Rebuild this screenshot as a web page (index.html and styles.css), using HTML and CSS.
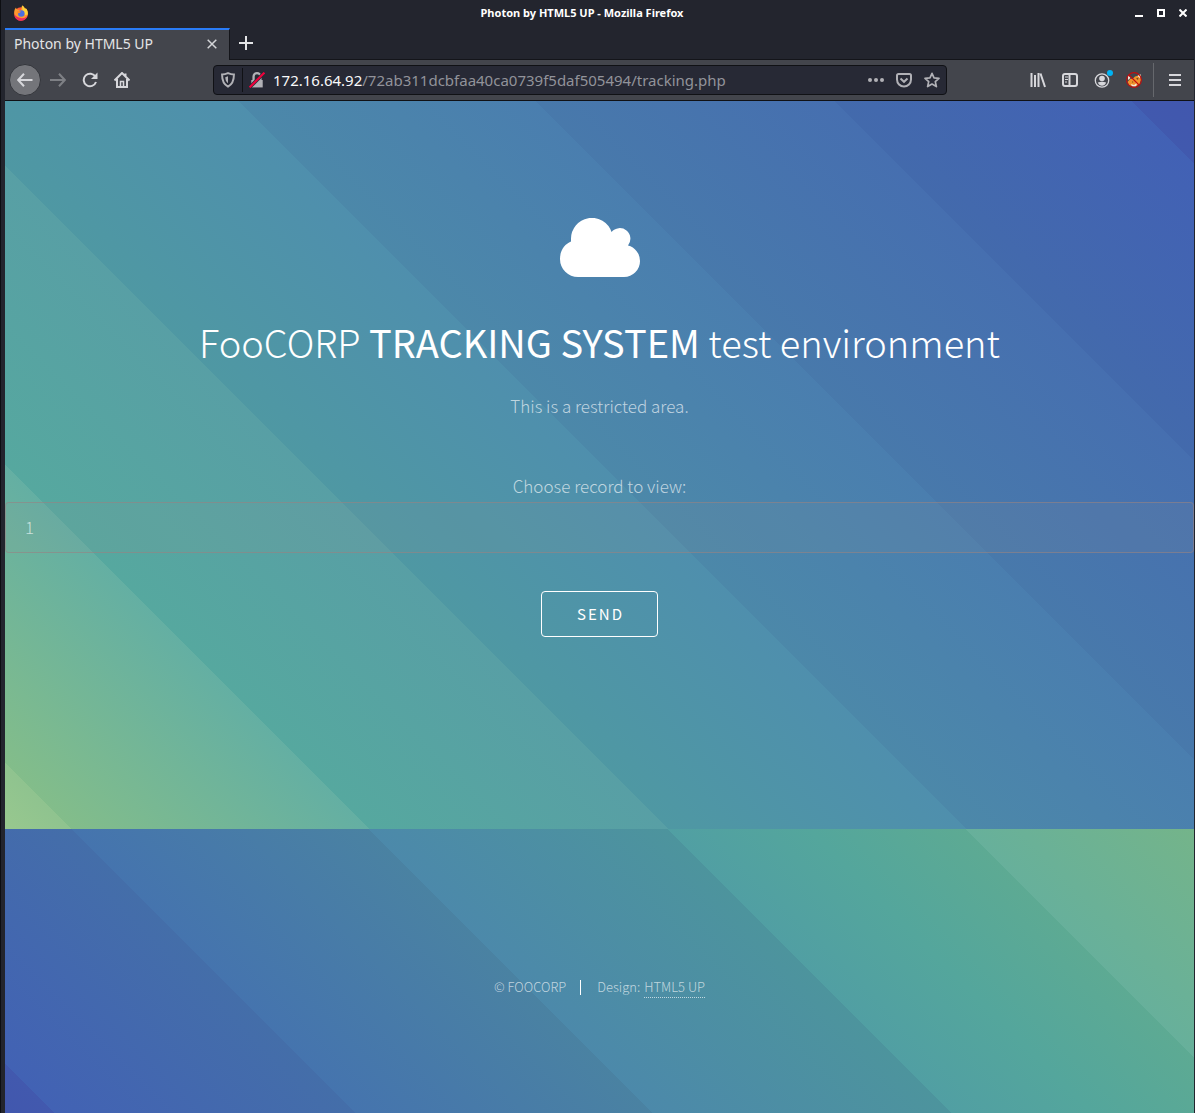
FILE: index.html
```html
<!DOCTYPE html>
<html lang="en">
<head>
<meta charset="utf-8">
<meta name="viewport" content="width=device-width, initial-scale=1">
<title>Photon by HTML5 UP</title>
<link rel="stylesheet" href="styles.css">
</head>
<body>
<div class="window">
  <div class="titlebar">
    <svg class="firefox" viewBox="0 0 16 16" aria-hidden="true">
      <circle cx="8" cy="9" r="6.8" fill="#ff5a36"/>
      <path d="M1.2 8C1 5 2.500 3.200 3 2.600c.2 1 .7 1.400 1.200 1.800L8 5l1-4.500c2 1 2.700 2.500 3 3.700.5-.3.6-.8.6-1.200C14.500 5 15 7 14.800 9.200 14 13 11 13.500 8 13.500S2 12 1.200 8z" fill="#ff9a2e"/>
      <path d="M9 .5c2 1 2.700 2.500 3 3.700.5-.3.6-.8.6-1.200C14.500 5 15 7 14.600 9.500L12 10 9.500 5z" fill="#ffd43a"/>
      <path d="M1.300 9.500C2 14 5 16 8.500 15.800c3-.3 5-2.300 5.800-4.800-2 2-4 2.500-6.500 2C5 12.500 3 11.500 1.300 9.500z" fill="#f02f5c"/>
      <circle cx="8.300" cy="8.500" r="3.300" fill="#4a6ee0"/>
      <path d="M4 6.500c1.500-.8 3-.3 4 .3L6.500 8l-2 .5z" fill="#ff8a2b"/>
    </svg>
    <span class="window-title">Photon by HTML5 UP - Mozilla Firefox</span>
    <div class="window-controls">
      <button type="button" aria-label="Minimize"><svg viewBox="0 0 8 8"><path d="M0 7h8" stroke="#fff" stroke-width="2"/></svg></button>
      <button type="button" aria-label="Maximize"><svg viewBox="0 0 8 8"><path d="M1 1h6v6H1z" fill="none" stroke="#fff" stroke-width="2"/></svg></button>
      <button type="button" aria-label="Close"><svg viewBox="0 0 8 8"><path d="M.5.5l7 7M7.500.5l-7 7" stroke="#fff" stroke-width="2"/></svg></button>
    </div>
  </div>

  <div class="tabs">
    <div class="tab">
      <span>Photon by HTML5 UP</span>
      <button type="button" aria-label="Close tab"><svg viewBox="0 0 10 10"><path d="M.7.700l8.600 8.600M9.300.700L.7 9.300" stroke="#d4d5d8" stroke-width="1.500"/></svg></button>
    </div>
    <button class="new-tab" type="button" aria-label="New tab"><svg viewBox="0 0 14 14"><path d="M7 0v14M0 7h14" stroke="#e3e4e6" stroke-width="2"/></svg></button>
  </div>

  <div class="toolbar">
    <div class="tools">
      <button class="tool back" type="button" aria-label="Back"><svg viewBox="0 0 16 16"><path d="M15.500 8H1.500M7 1.700L1.200 8 7 14.300"/></svg></button>
      <button class="tool forward" type="button" aria-label="Forward"><svg viewBox="0 0 16 16"><path d="M0 8h14.500M9 1.700L14.800 8 9 14.300"/></svg></button>
      <button class="tool" type="button" aria-label="Reload"><svg viewBox="0 0 16 16"><path d="M13.500 4.800A6.300 6.300 0 1 0 14 10"/><path d="M15.500.5V7H9z" fill="#d7d7db" stroke="none"/></svg></button>
      <button class="tool" type="button" aria-label="Home"><svg viewBox="0 0 16 16"><path d="M.5 8.500L8 1l7.500 7.500M3 7v8h10V7M11.500 1.500v3"/><path d="M6.500 15v-5.500h3V15" stroke-width="1.500"/></svg></button>
    </div>

    <div class="urlbar">
      <button class="mini" type="button" aria-label="Tracking protection"><svg viewBox="0 0 14 14"><path d="M7 1c2 .9 3.600 1.200 5.200 1.200 0 5-.8 8.300-5.200 10.600C2.600 10.500 1.800 7.200 1.800 2.200 3.400 2.200 5 1.900 7 1z" stroke-width="1.700"/><path d="M7 3.800v6c-1.700-1.300-2.300-3-2.400-5.300C5.500 4.400 6.200 4.200 7 3.800z" fill="#b1b1b6" stroke="none"/></svg></button>
      <span class="urlbar-rule"></span>
      <button class="mini" type="button" aria-label="Connection is not secure"><svg viewBox="0 0 14 14"><path d="M2 7h10v6.500H2z" fill="#b1b1b6" stroke="none"/><path d="M4 7V4a3 3 0 0 1 6 0v3"/><path d="M.5 13.500L13.500.5" stroke="#272935" stroke-width="3"/><path d="M.5 13.500L13.500.5" stroke="#f0003c" stroke-width="1.800"/></svg></button>
      <div class="address" role="textbox" aria-label="Address" tabindex="0"><span>172.16.64.92</span>/72ab311dcbfaa40ca0739f5daf505494/tracking.php</div>
      <button class="mini" type="button" aria-label="Page actions"><svg viewBox="0 0 16 16"><g fill="#b1b1b6" stroke="none"><circle cx="2" cy="8" r="2"/><circle cx="8" cy="8" r="2"/><circle cx="14" cy="8" r="2"/></g></svg></button>
      <button class="mini" type="button" aria-label="Save to Pocket"><svg viewBox="0 0 16 16"><path d="M2.500 2h11q1.500 0 1.500 1.500V7.500a7 7 0 0 1-14 0V3.500Q1 2 2.500 2z"/><path d="M4.500 6.500L8 9.800l3.500-3.300"/></svg></button>
      <button class="mini" type="button" aria-label="Bookmark"><svg viewBox="0 0 16 16"><path d="M8 1.300l2 4.500 5 .5-3.700 3.300 1.100 5L8 12l-4.400 2.600 1.100-5L1 6.300l5-.5z" stroke-linejoin="round" stroke-width="1.700"/></svg></button>
    </div>

    <div class="tools">
      <button class="tool" type="button" aria-label="Library"><svg viewBox="0 0 16 16"><path d="M1.500 1v14M5 3v12M8.500 1v14M10.500 1.500L15 15"/></svg></button>
      <button class="tool" type="button" aria-label="Sidebars"><svg viewBox="0 0 16 16"><rect x="1" y="2" width="14" height="12" rx="2"/><path d="M7.500 2v12"/><path d="M3 5h3M3 7.500h3M3 10h2" stroke-width="1"/></svg></button>
      <button class="tool account" type="button" aria-label="Account"><svg viewBox="0 0 16 16"><circle cx="8" cy="8.500" r="6.700" stroke-width="1.300"/><circle cx="8" cy="6.500" r="2.800" fill="#d7d7db" stroke="none"/><path d="M3.800 10.500q4.200-1.300 8.400 0-1.500 3.200-4.200 3.200t-4.200-3.200z" fill="#d7d7db" stroke="none"/></svg></button>
      <button class="tool" type="button" aria-label="Proxy off"><svg viewBox="0 0 16 16"><path d="M1.500 10L4 7l3-.5 2-2L14.500 3l.5 5-1.500 4-4 2.500-6-1z" fill="#f0922b" stroke="none"/><path d="M2 3l2.500 3L2 8zM14.500 2l-3 2 3 2.500zM5 12l3 1 3-2-1 3.500H6z" fill="#f3e6d8" stroke="none"/><path d="M10 6.500l2.500-1-.5 2.500zM6 9l1.500 1-1 1z" fill="#7c4b1f" stroke="none"/><circle cx="8" cy="8" r="7.400" stroke="#c30d0d" stroke-width="1.100"/><path d="M3 3l10 10" stroke="#c30d0d" stroke-width="1.100"/></svg></button>
      <span class="toolbar-rule"></span>
      <button class="tool" type="button" aria-label="Open menu"><svg viewBox="0 0 16 16"><path d="M2 3h12M2 8h12M2 13h12"/></svg></button>
    </div>
  </div>

  <div class="page">
    <header class="banner">
      <svg class="cloud" viewBox="0 0 80 59" aria-hidden="true"><path d="M18 59A18 18 0 0 1 0 41C0 32 5 26 11 23.500V21A20.800 20.800 0 0 1 51.500 14A10.500 10.500 0 0 1 68 27.500A16 16 0 0 1 80 43A16 16 0 0 1 64 59z" fill="#fff"/></svg>
      <h1>FooCORP <strong>TRACKING SYSTEM</strong> test environment</h1>
      <p>This is a restricted area.</p>
      <form class="lookup">
        <label for="record">Choose record to view:</label>
        <input id="record" type="text" name="id" value="1">
        <button type="submit">SEND</button>
      </form>
    </header>
    <footer class="footer">
      <ul>
        <li>© FOOCORP</li>
        <li>Design: <a href="#">HTML5 UP</a></li>
      </ul>
    </footer>
  </div>
</div>
</body>
</html>
```
FILE: styles.css
```css
*, *::before, *::after { box-sizing: border-box; }

body {
  margin: 0;
  background: #23252e;
  color: #fff;
  font-family: "Noto Sans", sans-serif;
}

button {
  display: grid;
  place-items: center;
  padding: 0;
  border: 0;
  background: none;
  color: inherit;
  font: inherit;
}

svg { display: block; }

.window {
  display: flex;
  flex-direction: column;
  min-height: 100vh;
  padding: 0 1px 0 4px;
  border-left: 1px solid #0d0e12;
}

/* Title bar */
.titlebar {
  display: grid;
  grid-template-columns: 1fr auto 1fr;
  align-items: center;
  height: 28px;
  padding: 0 7px 2px 8px;
}
.firefox { width: 16px; height: 16px; }
.window-title {
  padding-right: 36px;
  font-size: 11px;
  font-weight: 700;
  line-height: 16px;
}
.window-controls { display: flex; justify-content: flex-end; gap: 14px; }
.window-controls svg { width: 8px; height: 8px; }

/* Tabs */
.tabs { display: flex; height: 32px; border-bottom: 1px solid #14151a; }
.tab {
  display: flex;
  align-items: center;
  justify-content: space-between;
  width: 225px;
  height: 32px;
  padding: 0 12px 3px 9px;
  border-top: 2px solid #2a7cf7;
  border-right: 1px solid #14151a;
  background: #43454c;
  color: #e4e4e6;
  font-size: 14px;
}
.tab svg { width: 10px; height: 10px; }
.new-tab { width: 32px; height: 30px; }
.new-tab svg { width: 14px; height: 14px; }

/* Navigation toolbar */
.toolbar {
  display: grid;
  grid-template-columns: auto minmax(0, 734fr) auto;
  column-gap: 75px;
  align-items: center;
  height: 41px;
  padding: 0 3px 0 4px;
  border-bottom: 1px solid #101115;
  background: #43454c;
}
.tools { display: flex; align-items: center; }
.tool { width: 32px; height: 32px; }
.tool svg {
  width: 16px;
  height: 16px;
  fill: none;
  stroke: #d7d7db;
  stroke-width: 2;
}
.back {
  margin-right: 1px;
  border: 1px solid #33353b;
  border-radius: 50%;
  background: #74757a;
}
.forward svg { stroke: #7e8085; }
.account { position: relative; }
.account::after {
  content: "";
  position: absolute;
  top: 6px;
  right: 5px;
  width: 6px;
  height: 6px;
  border-radius: 50%;
  background: #00b3f4;
}
.toolbar-rule { width: 1px; height: 34px; margin: 0 5px 0 3px; background: #66686d; }

.urlbar {
  display: flex;
  align-items: center;
  height: 30px;
  border: 1px solid #101115;
  border-radius: 4px;
  background: #272935;
}
.mini { width: 28px; height: 28px; }
.mini svg {
  width: 16px;
  height: 16px;
  fill: none;
  stroke: #b1b1b6;
  stroke-width: 2;
}
.urlbar-rule { width: 1px; height: 24px; background: #101115; }
.address {
  flex: 1;
  min-width: 0;
  overflow: hidden;
  padding-left: 2px;
  color: #92939a;
  font-size: 15px;
  line-height: 24px;
  white-space: nowrap;
}
.address span { color: #f9f9fa; }

/* Web page */
.page {
  display: flex;
  flex: 1;
  flex-direction: column;
  color: rgba(255, 255, 255, 0.65);
  font-family: "Noto Sans CJK JP", "Open Sans", sans-serif;
  font-size: 17px;
  font-weight: 300;
  text-align: center;
}

/* Diagonal bands: every pair of stops at the same distance is a band edge */
.banner {
  padding: 117px 0 192px;
  background-image: linear-gradient(45deg,
    #98c88e 0, #8fc38f 47px,
    #83bd8a 47px, #64afa3 258px,
    #56a89f 258px, #589fa5 469px,
    #4f98a3 469px, #4f8fad 680px,
    #4c88a9 680px, #4a7eaf 890px,
    #4879ab 890px, #466fb0 1101px,
    #436aac 1101px, #4261b5 1311px,
    #4159ae 1311px, #4157ae 1356px);
}
.cloud { width: 80px; height: 59px; margin: 0 auto 35px; }
.banner h1 {
  margin: 0 0 20px;
  color: #fff;
  font-size: 38px;
  font-weight: 300;
  line-height: 60px;
}
.banner h1 strong { font-weight: 400; }
.banner p { margin: 0 0 52px; line-height: 28px; }

.lookup { display: flex; flex-direction: column; align-items: center; }
.lookup label { padding-bottom: 2px; line-height: 28px; }
.lookup input {
  width: 100%;
  height: 51px;
  margin-bottom: 38px;
  padding: 0 19px 2px;
  border: 1px solid rgba(150, 130, 130, 0.6);
  border-radius: 4px;
  background: rgba(144, 144, 144, 0.12);
  color: rgba(255, 255, 255, 0.65);
  font: inherit;
}
.lookup button {
  height: 46px;
  padding: 0 33px 2px 35px;
  border: 1px solid #fff;
  border-radius: 4px;
  color: #fff;
  font-size: 15px;
  font-weight: 400;
  letter-spacing: 2px;
}

.footer {
  flex: 1;
  padding: 146px 0 102px;
  background-image: linear-gradient(45deg,
    #4157ae 0, #4259ae 35px,
    #4262b4 35px, #446ea9 248px,
    #4574ae 248px, #4a82a2 458px,
    #4c89aa 458px, #4d949d 669px,
    #519fa3 669px, #54a69c 770px, #5daa93 880px,
    #67b09b 880px, #74b48a 1041px);
  font-size: 13px;
}
.footer ul {
  display: flex;
  justify-content: center;
  margin: 0;
  padding: 0;
  list-style: none;
  line-height: 24px;
}
.footer li { display: flex; align-items: center; gap: 4px; }
.footer li + li::before {
  content: "";
  width: 1px;
  height: 15px;
  margin: 0 12px 0 14px;
  background: #fff;
}
.footer a {
  border-bottom: 1px dotted currentColor;
  color: inherit;
  line-height: 21px;
  text-decoration: none;
}
```
